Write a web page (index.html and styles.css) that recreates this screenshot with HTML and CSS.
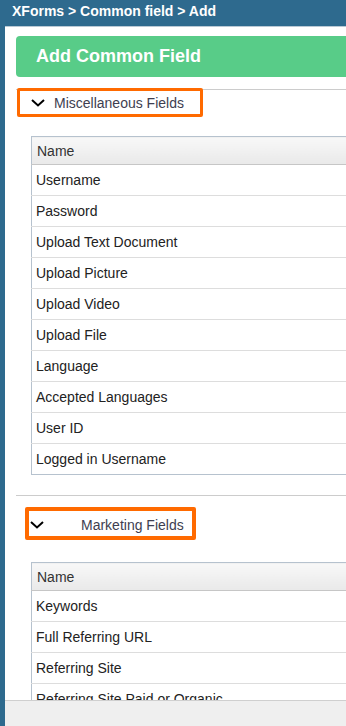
FILE: index.html
```html
<!DOCTYPE html>
<html lang="en">

<head>
  <meta charset="UTF-8">
  <meta name="viewport" content="width=device-width, initial-scale=1.0">
  <title>XForms - Add Common Field</title>
  <link rel="stylesheet" href="styles.css">
</head>

<body>
  <div class="page">
    <div class="topbar">XForms &gt; Common field &gt; Add</div>
    <div class="workspace">
      <div class="strip"></div>
      <div class="main">
        <div class="scroller">
          <div class="content">
            <div class="title_box">Add Common Field</div>
            <hr class="sep">

            <div class="group_head first">
              <svg class="chev" width="14" height="8" viewBox="0 0 14 8">
                <polyline points="1,1 7,6.5 13,1" fill="none" stroke="#000" stroke-width="2" />
              </svg>
              <span class="group_name">Miscellaneous Fields</span>
            </div>
            <table class="field_table">
              <thead>
                <tr>
                  <th>Name</th>
                </tr>
              </thead>
              <tbody>
                <tr><td>Username</td></tr>
                <tr><td>Password</td></tr>
                <tr><td>Upload Text Document</td></tr>
                <tr><td>Upload Picture</td></tr>
                <tr><td>Upload Video</td></tr>
                <tr><td>Upload File</td></tr>
                <tr><td>Language</td></tr>
                <tr><td>Accepted Languages</td></tr>
                <tr><td>User ID</td></tr>
                <tr><td>Logged in Username</td></tr>
              </tbody>
            </table>

            <hr class="sep second">

            <div class="group_head other">
              <svg class="chev" width="14" height="8" viewBox="0 0 14 8">
                <polyline points="1,1 7,6.5 13,1" fill="none" stroke="#000" stroke-width="2" />
              </svg>
              <span class="group_name">Marketing Fields</span>
            </div>
            <table class="field_table">
              <thead>
                <tr>
                  <th>Name</th>
                </tr>
              </thead>
              <tbody>
                <tr><td>Keywords</td></tr>
                <tr><td>Full Referring URL</td></tr>
                <tr><td>Referring Site</td></tr>
                <tr><td>Referring Site Paid or Organic</td></tr>
              </tbody>
            </table>
          </div>
        </div>
        <div class="footer"></div>
      </div>
    </div>
  </div>
</body>

</html>
```

FILE: styles.css
```css
body {
  margin: 0;
  font-family: "Liberation Sans", Arial, sans-serif;
  background-color: #2e6a8e;
}

.page {
  height: 100vh;
  display: flex;
  flex-direction: column;
  overflow: hidden;
}

.topbar {
  height: 26px;
  line-height: 23px;
  padding-left: 12px;
  color: #fff;
  font-weight: bold;
  font-size: 14px;
  white-space: nowrap;
  background-color: #2e6a8e;
}

.workspace {
  flex: 1;
  display: flex;
  min-height: 0;
}

.strip {
  width: 5px;
  background-color: #2e6a8e;
}

.main {
  flex: 1;
  display: flex;
  flex-direction: column;
  min-width: 0;
  background-color: #fff;
  border-top: 1px solid #b9c9d5;
}

.scroller {
  flex: 1;
  overflow: hidden;
}

.content {
  width: 420px;
  padding: 9px 0 0 11px;
}

.title_box {
  height: 41px;
  line-height: 41px;
  padding-left: 20px;
  border-radius: 4px;
  background-color: #58cc88;
  color: #fff;
  font-size: 18px;
  font-weight: bold;
}

.sep {
  border: 0;
  border-top: 1px solid #cccccc;
  margin: 12px 0 0 0;
}

.sep.second {
  margin-top: 20px;
}

.group_head {
  display: flex;
  align-items: center;
  border: 3px solid #ff6a00;
  border-radius: 2px;
  font-size: 14px;
  color: #3e3e50;
  box-sizing: border-box;
}

.group_head.first {
  width: 186px;
  height: 29px;
  margin: -2px 0 0 1px;
  padding: 1px 0 0 11px;
}

.group_head.other {
  width: 171px;
  height: 33px;
  margin: 11px 0 0 9px;
  padding: 3px 0 0 1px;
  border-width: 4px;
}

.chev {
  flex-shrink: 0;
  display: block;
}

.group_head.first .group_name {
  margin-left: 9px;
}

.group_head.other .group_name {
  margin-left: 37px;
}

.field_table {
  width: 380px;
  margin-left: 15px;
  border-collapse: collapse;
  border: 1px solid #b6c2ce;
  font-size: 14px;
}

.group_head.first + .field_table {
  margin-top: 19px;
}

.group_head.other + .field_table {
  margin-top: 22px;
}

.field_table th {
  height: 27px;
  padding: 0 5px;
  text-align: left;
  font-weight: normal;
  color: #333;
  background: linear-gradient(#f8f8f8, #e9e9e9);
  border-bottom: 1px solid #c6c6c6;
}

.field_table td {
  height: 30px;
  padding: 0 4px;
  color: #222;
  border-top: 1px solid #dddddd;
}

.footer {
  height: 25px;
  background-color: #efefef;
  border-top: 1px solid #cfcfcf;
}
```
